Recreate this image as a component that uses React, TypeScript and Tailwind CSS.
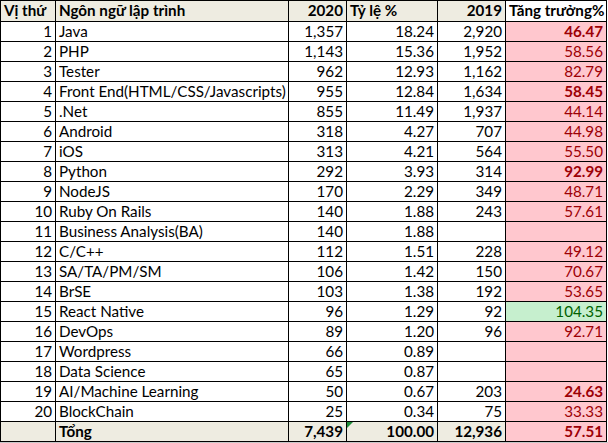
import React from "react";

type Row = {
  rank: string;
  name: string;
  y2020: string;
  pct: string;
  y2019: string;
  growth: string;
  kind: "red" | "green";
  bold?: boolean;
};

const rows: Row[] = [
  { rank: "1", name: "Java", y2020: "1,357", pct: "18.24", y2019: "2,920", growth: "46.47", kind: "red", bold: true },
  { rank: "2", name: "PHP", y2020: "1,143", pct: "15.36", y2019: "1,952", growth: "58.56", kind: "red" },
  { rank: "3", name: "Tester", y2020: "962", pct: "12.93", y2019: "1,162", growth: "82.79", kind: "red" },
  { rank: "4", name: "Front End(HTML/CSS/Javascripts)", y2020: "955", pct: "12.84", y2019: "1,634", growth: "58.45", kind: "red", bold: true },
  { rank: "5", name: ".Net", y2020: "855", pct: "11.49", y2019: "1,937", growth: "44.14", kind: "red" },
  { rank: "6", name: "Android", y2020: "318", pct: "4.27", y2019: "707", growth: "44.98", kind: "red" },
  { rank: "7", name: "iOS", y2020: "313", pct: "4.21", y2019: "564", growth: "55.50", kind: "red" },
  { rank: "8", name: "Python", y2020: "292", pct: "3.93", y2019: "314", growth: "92.99", kind: "red", bold: true },
  { rank: "9", name: "NodeJS", y2020: "170", pct: "2.29", y2019: "349", growth: "48.71", kind: "red" },
  { rank: "10", name: "Ruby On Rails", y2020: "140", pct: "1.88", y2019: "243", growth: "57.61", kind: "red" },
  { rank: "11", name: "Business Analysis(BA)", y2020: "140", pct: "1.88", y2019: "", growth: "", kind: "red" },
  { rank: "12", name: "C/C++", y2020: "112", pct: "1.51", y2019: "228", growth: "49.12", kind: "red" },
  { rank: "13", name: "SA/TA/PM/SM", y2020: "106", pct: "1.42", y2019: "150", growth: "70.67", kind: "red" },
  { rank: "14", name: "BrSE", y2020: "103", pct: "1.38", y2019: "192", growth: "53.65", kind: "red" },
  { rank: "15", name: "React Native", y2020: "96", pct: "1.29", y2019: "92", growth: "104.35", kind: "green" },
  { rank: "16", name: "DevOps", y2020: "89", pct: "1.20", y2019: "96", growth: "92.71", kind: "red" },
  { rank: "17", name: "Wordpress", y2020: "66", pct: "0.89", y2019: "", growth: "", kind: "red" },
  { rank: "18", name: "Data Science", y2020: "65", pct: "0.87", y2019: "", growth: "", kind: "red" },
  { rank: "19", name: "AI/Machine Learning", y2020: "50", pct: "0.67", y2019: "203", growth: "24.63", kind: "red", bold: true },
  { rank: "20", name: "BlockChain", y2020: "25", pct: "0.34", y2019: "75", growth: "33.33", kind: "red" },
];

const cell = "border border-black px-[3px] leading-none whitespace-nowrap overflow-hidden";

export default function App() {
  return (
    <div
      className="w-[608px] h-[443px] bg-white overflow-hidden text-[15.2px] text-black"
      style={{ fontFamily: "Lato, 'Noto Sans', sans-serif" }}
    >
      <table className="table-fixed border-collapse w-[606px]">
        <colgroup>
          <col className="w-[55px]" />
          <col className="w-[233px]" />
          <col className="w-[58px]" />
          <col className="w-[91px]" />
          <col className="w-[68px]" />
          <col className="w-[101px]" />
        </colgroup>
        <thead>
          <tr className="h-[21px] bg-[#eeece1] font-bold">
            <th className={`${cell} text-left font-bold`}>Vị thứ</th>
            <th className={`${cell} text-left font-bold`}>Ngôn ngữ lập trình</th>
            <th className={`${cell} text-right font-bold`}>2020</th>
            <th className={`${cell} text-left font-bold`}>Tỷ lệ %</th>
            <th className={`${cell} text-right font-bold`}>2019</th>
            <th className={`${cell} text-left font-bold bg-white`}>Tăng trưởng%</th>
          </tr>
        </thead>
        <tbody>
          {rows.map((r) => (
            <tr key={r.rank} className="h-[20px]">
              <td className={`${cell} text-right`}>{r.rank}</td>
              <td className={`${cell} text-left`}>{r.name}</td>
              <td className={`${cell} text-right`}>{r.y2020}</td>
              <td className={`${cell} text-right`}>{r.pct}</td>
              <td className={`${cell} text-right`}>{r.y2019}</td>
              <td
                className={`${cell} text-right ${
                  r.kind === "green"
                    ? "bg-[#c6efce] text-[#006100]"
                    : "bg-[#ffc7ce] text-[#9c0006]"
                } ${r.bold ? "font-bold" : ""}`}
              >
                {r.growth}
              </td>
            </tr>
          ))}
          <tr className="h-[20px] bg-[#eeece1] font-bold">
            <td className={cell}></td>
            <td className={`${cell} text-left`}>Tổng</td>
            <td className={`${cell} text-right`}>7,439</td>
            <td className={`${cell} text-right relative`}>
              <span className="absolute left-0 top-0 w-0 h-0 border-t-[6px] border-t-[#1e8c3a] border-r-[6px] border-r-transparent" />
              100.00
            </td>
            <td className={`${cell} text-right`}>12,936</td>
            <td className={`${cell} text-right bg-[#ffc7ce] text-[#9c0006]`}>57.51</td>
          </tr>
        </tbody>
      </table>
      <div className="h-[2px] w-full bg-[#c8c8c8]" />
    </div>
  );
}
